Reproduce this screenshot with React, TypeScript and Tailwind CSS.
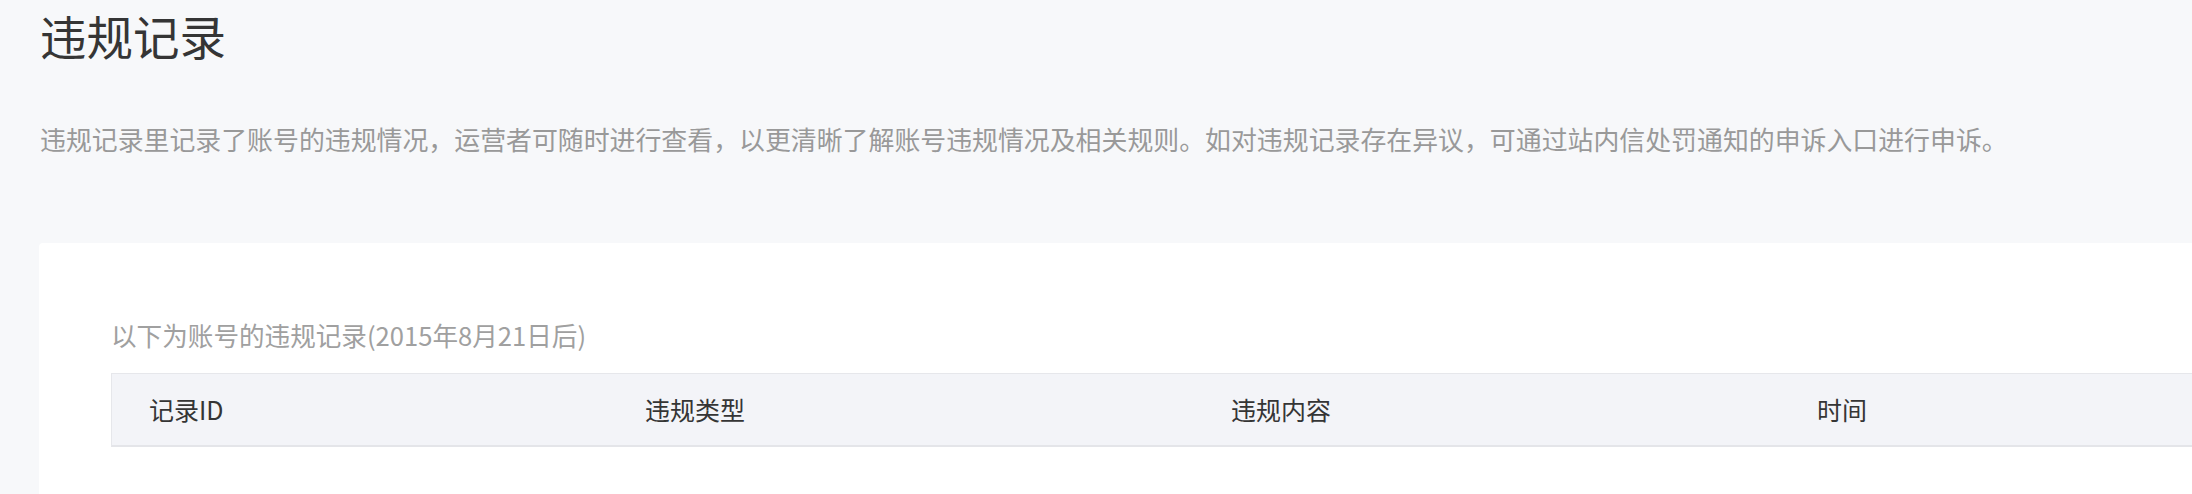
export default function App() {
  const columns = [
    { label: "记录ID", width: "w-[496px]" },
    { label: "违规类型", width: "w-[586px]" },
    { label: "违规内容", width: "w-[586px]" },
    { label: "时间", width: "flex-1" },
  ];

  return (
    <div className="w-screen h-[494px] overflow-hidden bg-[#f7f8fa] font-['Noto_Sans_CJK_SC',sans-serif]">
      <div className="pl-[40px] pt-[12px]">
        <h1 className="text-[46.5px] leading-none font-normal text-[#353535]">违规记录</h1>
        <p className="mt-[67px] text-[25.9px] leading-none text-[#999999] whitespace-nowrap">
          违规记录里记录了账号的违规情况，运营者可随时进行查看，以更清晰了解账号违规情况及相关规则。如对违规记录存在异议，可通过站内信处罚通知的申诉入口进行申诉。
        </p>
      </div>

      <div className="ml-[39px] mt-[92px] w-[2300px] bg-white rounded-[4px] pl-[72px] pt-[79px] pb-[60px]">
        <p className="text-[25.6px] leading-none text-[#a0a0a0]">以下为账号的违规记录(2015年8月21日后)</p>
        <div className="mt-[25px] flex h-[74px] items-center bg-[#f3f4f8] border-t border-l border-[#e6e7eb] border-b-2 border-b-[#e4e5e9]">
          {columns.map((col, i) => (
            <div key={i} className={`${col.width} pl-[37px] text-[25px] leading-none text-[#353535]`}>
              {col.label}
            </div>
          ))}
        </div>
      </div>
    </div>
  );
}
